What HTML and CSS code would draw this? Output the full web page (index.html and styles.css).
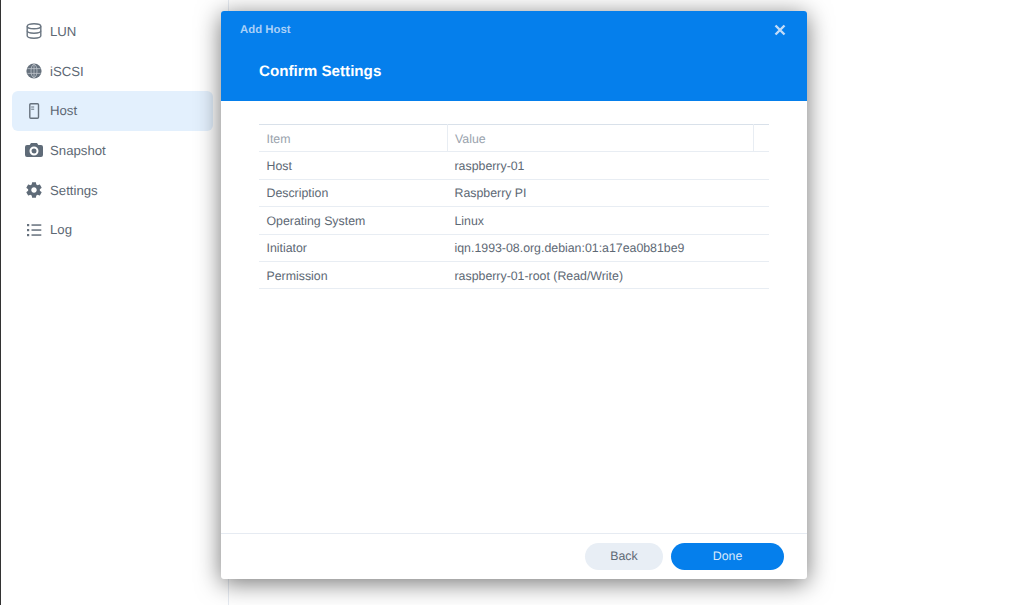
FILE: index.html
```html
<!DOCTYPE html>
<html lang="en">
<head>
<meta charset="utf-8">
<title>Add Host</title>
<link rel="stylesheet" href="styles.css">
</head>
<body>
<div class="app">
  <nav class="sidebar">
    <a class="nav-item"><svg class="icon" viewBox="0 0 16 16"><g fill="none" stroke="#6b7682" stroke-width="1.400"><ellipse cx="8" cy="3.200" rx="6.800" ry="2.500"/><path d="M1.200 3.200v9.600c0 1.400 3 2.400 6.800 2.400s6.800-1 6.800-2.400V3.200"/><path d="M1.200 7.800c0 1.400 3 2.400 6.800 2.400s6.800-1 6.800-2.400"/></g></svg><span>LUN</span></a>
    <a class="nav-item"><svg class="icon" viewBox="0 0 16 16"><circle cx="8" cy="8" r="7.600" fill="#66717d"/><g fill="none" stroke="#c9ced4" stroke-width="0.700"><ellipse cx="8" cy="8" rx="3" ry="6.600"/><path d="M1.400 5.600h13.200M1.400 10.400h13.200M8 1.400v13.200"/></g></svg><span>iSCSI</span></a>
    <a class="nav-item active"><svg class="icon" viewBox="0 0 16 16"><g fill="none" stroke="#66717d" stroke-width="1.400"><rect x="3.800" y="0.800" width="8.700" height="14.400" rx="1"/><path d="M5.200 4h3M5.200 6.200h3" stroke-width="1"/></g></svg><span>Host</span></a>
    <a class="nav-item"><svg class="icon wide" viewBox="0 0 18 16"><path fill="#5f6b78" fill-rule="evenodd" d="M6 1h6l1.300 2H16a2 2 0 0 1 2 2v8a2 2 0 0 1-2 2H2a2 2 0 0 1-2-2V5a2 2 0 0 1 2-2h2.700zM9 4.500a4.500 4.500 0 1 0 0 9 4.500 4.500 0 0 0 0-9zm0 2a2.500 2.500 0 1 1 0 5 2.500 2.500 0 0 1 0-5z"/></svg><span>Snapshot</span></a>
    <a class="nav-item"><svg class="icon" viewBox="2.500 1.800 19 20.400"><path fill="#5f6b78" d="M19.430 12.980c.04-.32.070-.64.070-.98s-.03-.66-.07-.98l2.110-1.650c.19-.15.240-.42.120-.64l-2-3.460c-.12-.22-.39-.3-.61-.22l-2.490 1c-.52-.4-1.080-.73-1.690-.98l-.38-2.650C14.460 2.180 14.250 2 14 2h-4c-.25 0-.46.180-.49.420l-.38 2.650c-.61.25-1.170.59-1.690.98l-2.490-1c-.23-.09-.49 0-.61.220l-2 3.460c-.13.220-.07.490.12.640l2.110 1.650c-.04.320-.07.650-.07.980s.03.660.07.980l-2.110 1.650c-.19.150-.24.420-.12.640l2 3.460c.12.220.39.300.61.220l2.490-1c.52.400 1.080.730 1.690.980l.38 2.650c.03.240.24.420.49.420h4c.25 0 .46-.18.49-.42l.38-2.650c.61-.25 1.170-.59 1.690-.98l2.490 1c.23.090.49 0 .61-.22l2-3.460c.12-.22.070-.49-.12-.64l-2.110-1.650zM12 15.500c-1.930 0-3.500-1.570-3.500-3.500s1.570-3.500 3.500-3.500 3.500 1.570 3.500 3.500-1.570 3.500-3.500 3.500z"/></svg><span>Settings</span></a>
    <a class="nav-item"><svg class="icon" viewBox="0 0 16 16"><g fill="#66717d"><rect x="1" y="2" width="2.200" height="2.200"/><rect x="5.500" y="2.300" width="9.800" height="1.500"/><rect x="1" y="7" width="2.200" height="2.200"/><rect x="5.500" y="7.300" width="9.800" height="1.500"/><rect x="1" y="12" width="2.200" height="2.200"/><rect x="5.500" y="12.300" width="9.800" height="1.500"/></g></svg><span>Log</span></a>
  </nav>
</div>
<section class="dialog">
  <header class="dialog-head">
    <div class="dialog-top"><span class="dialog-name">Add Host</span>
      <svg class="close" viewBox="0 0 12 12"><path d="M1.500 1.500l9 9M10.500 1.500l-9 9" stroke="#c2dcf8" stroke-width="2.400" fill="none"/></svg>
    </div>
    <h1 class="dialog-title">Confirm Settings</h1>
  </header>
  <div class="dialog-body">
    <table class="grid">
      <thead><tr><th class="c1">Item</th><th class="c2">Value</th><th></th></tr></thead>
      <tbody>
        <tr><td>Host</td><td colspan="2">raspberry-01</td></tr>
        <tr><td>Description</td><td colspan="2">Raspberry PI</td></tr>
        <tr><td>Operating System</td><td colspan="2">Linux</td></tr>
        <tr><td>Initiator</td><td colspan="2">iqn.1993-08.org.debian:01:a17ea0b81be9</td></tr>
        <tr><td>Permission</td><td colspan="2">raspberry-01-root (Read/Write)</td></tr>
      </tbody>
    </table>
  </div>
  <footer class="dialog-foot">
    <button class="btn back">Back</button>
    <button class="btn done">Done</button>
  </footer>
</section>
</body>
</html>
```

FILE: styles.css
```css
* { box-sizing: border-box; }
html, body { margin: 0; height: 100%; overflow: hidden; background: #fff; }
body { font-family: "Liberation Sans", Arial, sans-serif; color: #4f5a66; border-left: 1px solid #333; text-rendering: geometricPrecision; }
.app { display: flex; height: 100%; }
.sidebar { width: 228px; height: 100%; border-right: 1px solid #e6ebf2; padding: 11.500px 15px 0 11px; }
.nav-item { display: flex; align-items: center; height: 39.700px; padding-left: 14px; border-radius: 6px; font-size: 13.200px; color: #5d6874; }
.nav-item.active { background: #e3f0fd; }
.icon { width: 16px; height: 16px; margin-right: 8px; flex: none; }
.icon.wide { width: 18px; margin-left: -1px; margin-right: 7px; }
.dialog { position: absolute; left: 221px; top: 11px; width: 586px; height: 567.500px; display: flex; flex-direction: column; background: #fff; border-radius: 3px; box-shadow: 0 4px 24px rgba(0,0,0,.55); overflow: hidden; }
.dialog-head { height: 90px; background: #057fec; padding: 0 19px; flex: none; }
.dialog-top { display: flex; align-items: center; justify-content: space-between; height: 38px; }
.dialog-name { font-size: 11.400px; font-weight: 700; color: #a9d0f8; }
.close { width: 12px; height: 12px; margin-right: 2px; }
.dialog-title { margin: 12.500px 0 0 19px; font-size: 15.200px; line-height: 20px; font-weight: 700; color: #fff; }
.dialog-body { flex: 1; padding: 23px 38px 0; }
.grid { width: 510px; border-collapse: collapse; table-layout: fixed; font-size: 12.350px; }
.grid th, .grid td { height: 27.400px; padding: 1px 7.500px 0; text-align: left; font-weight: 400; border-bottom: 1px solid #e8edf3; color: #5d6874; }
.grid thead tr { border-top: 1px solid #d9e1ea; }
.grid th { color: #9aa3ad; }
.grid .c1 { width: 188px; border-right: 1px solid #e8edf3; }
.grid .c2 { width: 306px; border-right: 1px solid #e8edf3; }
.dialog-foot { height: 45.500px; flex: none; border-top: 1px solid #e6ebf2; display: flex; justify-content: flex-end; align-items: flex-start; gap: 8px; padding: 9px 23px 0 0; }
.btn { height: 26.500px; border: 0; border-radius: 14px; font: 12.350px "Liberation Sans", Arial, sans-serif; text-rendering: geometricPrecision; }
.back { width: 78px; background: #e8eef5; color: #5d6874; }
.done { width: 113px; background: #057fec; color: #d8e9fb; }
```
